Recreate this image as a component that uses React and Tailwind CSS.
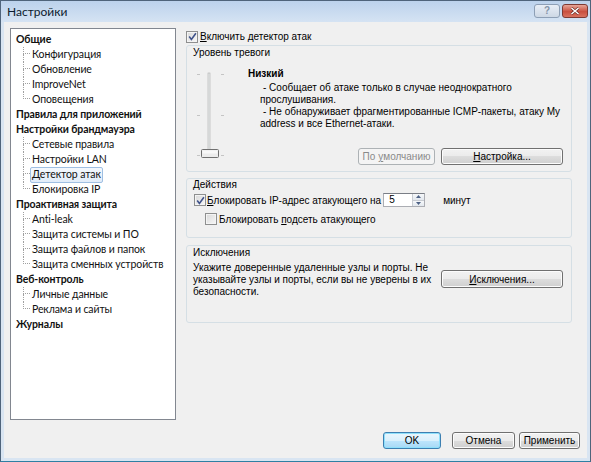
import React from "react";

const TREE = [
  { label: "Общие", children: ["Конфигурация", "Обновление", "ImproveNet", "Оповещения"] },
  { label: "Правила для приложений", children: [] },
  { label: "Настройки брандмауэра", children: ["Сетевые правила", "Настройки LAN", "Детектор атак", "Блокировка IP"] },
  { label: "Проактивная защита", children: ["Anti-leak", "Защита системы и ПО", "Защита файлов и папок", "Защита сменных устройств"] },
  { label: "Веб-контроль", children: ["Личные данные", "Реклама и сайты"] },
  { label: "Журналы", children: [] },
];

const BTN =
  "h-[17px] flex items-center justify-center rounded-[3px] border border-[#707070] text-black bg-[linear-gradient(to_bottom,#f2f2f2_0%,#ebebeb_50%,#dddddd_50%,#cfcfcf_100%)] shadow-[inset_0_0_0_1px_#fcfcfc]";

function Check({ checked }) {
  return (
    <span className="w-[12px] h-[12px] shrink-0 border border-[#8e8f8f] bg-[linear-gradient(135deg,#d9d9d9,#f7f7f7)] shadow-[inset_0_0_0_1px_#f4f4f4] flex items-center justify-center">
      {checked && (
        <svg width="9" height="9" viewBox="0 0 9 9">
          <path d="M1.2 4.6 L3.4 7.4 L7.9 1.2" fill="none" stroke="#3f528a" strokeWidth="1.6" />
        </svg>
      )}
    </span>
  );
}

function TreeRow({ text, last, selected }) {
  return (
    <div className="h-[15px] flex items-stretch">
      <div className="w-[12px] shrink-0" />
      <div className="w-[7px] shrink-0 flex flex-col">
        <div className="h-[7px] border-l border-b border-dotted border-[#a0a0a0]" />
        <div className={last ? "flex-1" : "flex-1 border-l border-dotted border-[#a0a0a0]"} />
      </div>
      <div className="flex items-center">
        <span
          className={
            selected
              ? "h-[16px] flex items-center px-[1px] whitespace-nowrap border border-[#9fbfe2] rounded-[2px] bg-[linear-gradient(to_bottom,#f4f8fd,#e1ecf9)]"
              : "h-[16px] flex items-center px-[1px] whitespace-nowrap border border-transparent"
          }
        >
          {text}
        </span>
      </div>
    </div>
  );
}

function Slider() {
  return (
    <svg width="32" height="96" viewBox="0 0 32 96" className="shrink-0">
      <rect x="13" y="5" width="2" height="82" fill="#e7eaea" stroke="#b0b0b0" strokeWidth="0.6" />
      {[6, 47, 87].map((y) => (
        <g key={y}>
          <line x1="2" y1={y + 0.5} x2="5" y2={y + 0.5} stroke="#c4c4c4" />
          <line x1="26" y1={y + 0.5} x2="29" y2={y + 0.5} stroke="#c4c4c4" />
        </g>
      ))}
      <rect x="6.5" y="81.5" width="17" height="8" rx="1" fill="#ececec" stroke="#707070" />
      <rect x="7.5" y="82.5" width="15" height="3" fill="#f8f8f8" />
    </svg>
  );
}

function Spin() {
  return (
    <div className="w-[42px] h-[14px] shrink-0 flex border border-[#abadb3] border-t-[#7a7e86] bg-white">
      <span className="flex-1 pl-[5px] leading-[12px]">5</span>
      <div className="w-[12px] flex flex-col border-l border-[#c8ccd2]">
        <div className="flex-1 flex items-center justify-center bg-[linear-gradient(to_bottom,#f6f8fa,#e3e8ee)] border-b border-[#c8ccd2]">
          <svg width="5" height="3" viewBox="0 0 5 3"><path d="M0 3 L2.5 0 L5 3Z" fill="#4d6185" /></svg>
        </div>
        <div className="flex-1 flex items-center justify-center bg-[linear-gradient(to_bottom,#f6f8fa,#e3e8ee)]">
          <svg width="5" height="3" viewBox="0 0 5 3"><path d="M0 0 L2.5 3 L5 0Z" fill="#4d6185" /></svg>
        </div>
      </div>
    </div>
  );
}

export default function App() {
  return (
    <div className="w-[591px] h-[462px] flex flex-col border border-[#4f647b] border-b-[#2f7fa3] bg-[#d9e5f2] font-['Liberation_Sans',Arial,sans-serif] text-[10px] text-black overflow-hidden">
      {/* Title bar */}
      <div className="h-[21px] shrink-0 flex items-center pl-[6px] pr-[2px] bg-[linear-gradient(to_bottom,#bcd2ec,#d5e3f3)]">
        <span className="font-['Lato',sans-serif] text-[12px] text-[#0c1b2e]">Настройки</span>
        <div className="ml-auto flex gap-[2px] self-start mt-[3px]">
          <div className="w-[26px] h-[14px] rounded-[3px] border border-[#8d9fb5] bg-[linear-gradient(to_bottom,#e8eef6,#cdd8e5)] flex items-center justify-center text-[10px] font-bold leading-none text-[#8594a8]">
            ?
          </div>
          <div className="w-[26px] h-[14px] rounded-[3px] border border-[#7e3a33] bg-[linear-gradient(to_bottom,#e7a699,#c9503f_55%,#d9725f)] flex items-center justify-center">
            <svg width="10" height="8" viewBox="0 0 10 8">
              <path d="M1.5 1 L8.5 7 M8.5 1 L1.5 7" stroke="#5b1f19" strokeWidth="2.6" />
              <path d="M1.5 1 L8.5 7 M8.5 1 L1.5 7" stroke="#ffffff" strokeWidth="1.6" />
            </svg>
          </div>
        </div>
      </div>

      {/* Client area */}
      <div className="flex-1 mx-[3px] mb-[3px] bg-[#f0f0f0] flex flex-col px-[6px] pt-[6px]">
        <div className="flex h-[392px]">
          {/* Tree */}
          <div className="w-[166px] shrink-0 border border-[#828790] bg-white pt-[3px] font-['Lato',sans-serif] text-[10.5px] tracking-[-0.1px] text-[#111]">
            {TREE.map((node) => (
              <div key={node.label}>
                <div className="h-[15px] flex items-center pl-[5px] font-bold whitespace-nowrap">{node.label}</div>
                {node.children.map((c, i) => (
                  <TreeRow key={c} text={c} last={i === node.children.length - 1} selected={c === "Детектор атак"} />
                ))}
              </div>
            ))}
          </div>

          {/* Right panel */}
          <div className="w-[386px] ml-[10px] flex flex-col whitespace-nowrap">
            <div className="mt-[2px] h-[13px] flex items-center gap-[2px]">
              <Check checked />
              <span>
                <span className="underline">В</span>ключить детектор атак
              </span>
            </div>

            {/* Уровень тревоги */}
            <div className="mt-[2px] h-[127px] border border-[#d5dfe5] rounded-[3px] flex flex-col">
              <div className="mt-[1px] pl-[6px] leading-[12px]">Уровень тревоги</div>
              <div className="mt-[9px] flex">
                <div className="ml-[8px]">
                  <Slider />
                </div>
                <div className="ml-[21px] flex-1 pr-[8px] flex flex-col">
                  <div className="font-bold leading-[12px]">Низкий</div>
                  <div className="mt-[2px] pl-[12px] leading-[12px]">
                    <div className="pl-[3px]">- Сообщает об атаке только в случае неоднократного</div>
                    <div>прослушивания.</div>
                    <div className="pl-[3px]">- Не обнаруживает фрагментированные ICMP-пакеты, атаку My</div>
                    <div>address и все Ethernet-атаки.</div>
                  </div>
                  <div className="mt-[18px] flex justify-end gap-[6px]">
                    <div className="w-[77px] h-[17px] flex items-center justify-center rounded-[3px] border border-[#adb2b5] bg-[#f4f4f4] text-[#8a8a8a]">
                      По <span className="underline ml-[3px]">у</span>молчанию
                    </div>
                    <div className={`${BTN} w-[122px]`}>
                      <span className="underline">Н</span>астройка...
                    </div>
                  </div>
                </div>
              </div>
            </div>

            {/* Действия */}
            <div className="mt-[6px] h-[60px] border border-[#d5dfe5] rounded-[3px] flex flex-col">
              <div className="pl-[6px] leading-[12px]">Действия</div>
              <div className="mt-[2px] h-[14px] flex items-center pl-[7px]">
                <Check checked />
                <span className="min-w-[173px] pl-[1px] pr-[2px]">
                  <span className="underline">Б</span>локировать IP-адрес атакующего на
                </span>
                <Spin />
                <span className="ml-[18px]">минут</span>
              </div>
              <div className="mt-[6px] h-[12px] flex items-center pl-[18px] gap-[2px]">
                <Check />
                <span>
                  Блокировать <span className="underline">п</span>одсеть атакующего
                </span>
              </div>
            </div>

            {/* Исключения */}
            <div className="mt-[7px] h-[78px] border border-[#d5dfe5] rounded-[3px] flex flex-col">
              <div className="mt-[1px] pl-[6px] leading-[12px]">Исключения</div>
              <div className="mt-[3px] flex pl-[6px]">
                <div className="w-[230px] leading-[12px]">
                  <div>Укажите доверенные удаленные узлы и порты. Не</div>
                  <div>указывайте узлы и порты, если вы не уверены в их</div>
                  <div>безопасности.</div>
                </div>
                <div className={`${BTN} ml-[18px] mt-[8px] w-[122px] h-[18px]`}>
                  <span className="underline">И</span>сключения...
                </div>
              </div>
            </div>
          </div>
        </div>

        {/* Dialog buttons */}
        <div className="mt-[12px] flex justify-end pr-[1px]">
          <div className="w-[58px] h-[17px] flex items-center justify-center rounded-[3px] border border-[#3c7fb1] bg-[linear-gradient(to_bottom,#eaf6fd_0%,#d9f0fc_50%,#bee6fd_50%,#a7d9f5_100%)] shadow-[inset_0_0_0_1px_#8ee0fb]">
            OK
          </div>
          <div className={`${BTN} w-[63px] ml-[11px]`}>Отмена</div>
          <div className={`${BTN} w-[61px] ml-[4px]`}>Применить</div>
        </div>
      </div>
    </div>
  );
}
